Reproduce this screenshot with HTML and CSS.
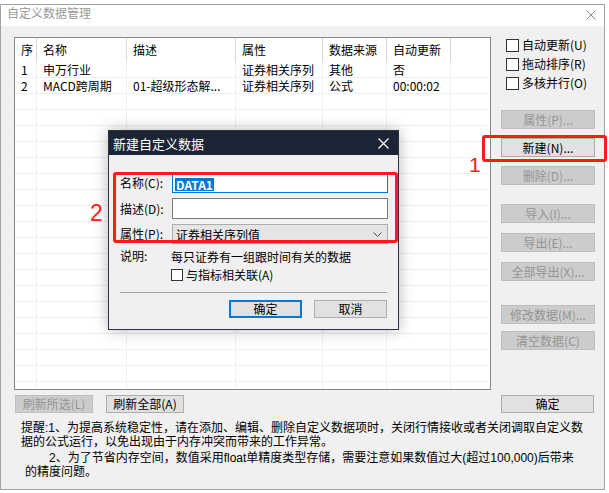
FILE: index.html
```html
<!DOCTYPE html>
<html lang="zh">
<head>
<meta charset="utf-8">
<title>自定义数据管理</title>
<link rel="stylesheet" href="styles.css">
</head>
<body>
<div class="topstrip"></div>
<div class="window">
  <div class="titlebar">
    <span class="title">自定义数据管理</span>
    <svg class="close" width="10" height="10" viewBox="0 0 10 10"><path d="M0.5 0.5L9.5 9.5M9.5 0.5L0.5 9.5" stroke="#8c8c8c" stroke-width="1"/></svg>
  </div>
  <div class="content">
    <div class="main">
      <div class="list">
        <div class="row head">
          <div class="c c1">序</div><div class="c c2">名称</div><div class="c c3">描述</div><div class="c c4">属性</div><div class="c c5">数据来源</div><div class="c c6">自动更新</div><div class="c c7"></div>
        </div>
        <div class="row">
          <div class="c c1">1</div><div class="c c2">申万行业</div><div class="c c3"></div><div class="c c4">证券相关序列</div><div class="c c5">其他</div><div class="c c6">否</div><div class="c c7"></div>
        </div>
        <div class="row">
          <div class="c c1">2</div><div class="c c2">MACD跨周期</div><div class="c c3">01-超级形态解...</div><div class="c c4">证券相关序列</div><div class="c c5">公式</div><div class="c c6">00:00:02</div><div class="c c7"></div>
        </div>
        <div class="row"><div class="c c1"></div><div class="c c2"></div><div class="c c3"></div><div class="c c4"></div><div class="c c5"></div><div class="c c6"></div><div class="c c7"></div></div>
        <div class="row"><div class="c c1"></div><div class="c c2"></div><div class="c c3"></div><div class="c c4"></div><div class="c c5"></div><div class="c c6"></div><div class="c c7"></div></div>
        <div class="row"><div class="c c1"></div><div class="c c2"></div><div class="c c3"></div><div class="c c4"></div><div class="c c5"></div><div class="c c6"></div><div class="c c7"></div></div>
        <div class="row"><div class="c c1"></div><div class="c c2"></div><div class="c c3"></div><div class="c c4"></div><div class="c c5"></div><div class="c c6"></div><div class="c c7"></div></div>
        <div class="row"><div class="c c1"></div><div class="c c2"></div><div class="c c3"></div><div class="c c4"></div><div class="c c5"></div><div class="c c6"></div><div class="c c7"></div></div>
        <div class="row"><div class="c c1"></div><div class="c c2"></div><div class="c c3"></div><div class="c c4"></div><div class="c c5"></div><div class="c c6"></div><div class="c c7"></div></div>
        <div class="row"><div class="c c1"></div><div class="c c2"></div><div class="c c3"></div><div class="c c4"></div><div class="c c5"></div><div class="c c6"></div><div class="c c7"></div></div>
        <div class="row"><div class="c c1"></div><div class="c c2"></div><div class="c c3"></div><div class="c c4"></div><div class="c c5"></div><div class="c c6"></div><div class="c c7"></div></div>
        <div class="row"><div class="c c1"></div><div class="c c2"></div><div class="c c3"></div><div class="c c4"></div><div class="c c5"></div><div class="c c6"></div><div class="c c7"></div></div>
        <div class="row"><div class="c c1"></div><div class="c c2"></div><div class="c c3"></div><div class="c c4"></div><div class="c c5"></div><div class="c c6"></div><div class="c c7"></div></div>
        <div class="row"><div class="c c1"></div><div class="c c2"></div><div class="c c3"></div><div class="c c4"></div><div class="c c5"></div><div class="c c6"></div><div class="c c7"></div></div>
        <div class="row"><div class="c c1"></div><div class="c c2"></div><div class="c c3"></div><div class="c c4"></div><div class="c c5"></div><div class="c c6"></div><div class="c c7"></div></div>
        <div class="row"><div class="c c1"></div><div class="c c2"></div><div class="c c3"></div><div class="c c4"></div><div class="c c5"></div><div class="c c6"></div><div class="c c7"></div></div>
        <div class="row"><div class="c c1"></div><div class="c c2"></div><div class="c c3"></div><div class="c c4"></div><div class="c c5"></div><div class="c c6"></div><div class="c c7"></div></div>
        <div class="row"><div class="c c1"></div><div class="c c2"></div><div class="c c3"></div><div class="c c4"></div><div class="c c5"></div><div class="c c6"></div><div class="c c7"></div></div>
        <div class="row"><div class="c c1"></div><div class="c c2"></div><div class="c c3"></div><div class="c c4"></div><div class="c c5"></div><div class="c c6"></div><div class="c c7"></div></div>
        <div class="row"><div class="c c1"></div><div class="c c2"></div><div class="c c3"></div><div class="c c4"></div><div class="c c5"></div><div class="c c6"></div><div class="c c7"></div></div>
        <div class="row"><div class="c c1"></div><div class="c c2"></div><div class="c c3"></div><div class="c c4"></div><div class="c c5"></div><div class="c c6"></div><div class="c c7"></div></div>
        <div class="row"><div class="c c1"></div><div class="c c2"></div><div class="c c3"></div><div class="c c4"></div><div class="c c5"></div><div class="c c6"></div><div class="c c7"></div></div>
      </div>
      <div class="side">
        <div class="check"><span class="box"></span><span>自动更新(U)</span></div>
        <div class="check"><span class="box"></span><span>拖动排序(R)</span></div>
        <div class="check"><span class="box"></span><span>多核并行(O)</span></div>
        <div class="group ga">
          <div class="btn dis">属性(P)...</div>
          <div class="btn">新建(N)...</div>
          <div class="btn dis">删除(D)...</div>
        </div>
        <div class="group gb">
          <div class="btn dis">导入(I)...</div>
          <div class="btn dis">导出(E)...</div>
          <div class="btn dis">全部导出(X)...</div>
        </div>
        <div class="group gc">
          <div class="btn dis">修改数据(M)...</div>
          <div class="btn dis">清空数据(C)</div>
        </div>
      </div>
    </div>
    <div class="bottom">
      <div class="btn dis small">刷新所选(L)</div>
      <div class="btn small">刷新全部(A)</div>
      <div class="btn ok">确定</div>
    </div>
    <div class="notes">
      <p class="p1">提醒:1、为提高系统稳定性，请在添加、编辑、删除自定义数据项时，关闭行情接收或者关闭调取自定义数<br>据的公式运行，以免出现由于内存冲突而带来的工作异常。</p>
      <p class="p2">　　2、为了节省内存空间，数值采用float单精度类型存储，需要注意如果数值过大(超过100,000)后带来<br>的精度问题。</p>
    </div>
  </div>
</div>

<div class="dialog">
  <div class="dtitle">
    <span>新建自定义数据</span>
    <svg class="dclose" width="11" height="11" viewBox="0 0 11 11"><path d="M0.5 0.5L10.5 10.5M10.5 0.5L0.5 10.5" stroke="#ffffff" stroke-width="1.2"/></svg>
  </div>
  <div class="dbody">
    <div class="form">
      <div class="lab">名称(C):</div>
      <div class="inp focus"><span class="sel">DATA1</span></div>
      <div class="lab">描述(D):</div>
      <div class="inp"></div>
      <div class="lab">属性(P):</div>
      <div class="combo"><span>证券相关序列值</span><svg width="9" height="5" viewBox="0 0 9 5"><path d="M0.5 0.5L4.5 4.5L8.5 0.5" fill="none" stroke="#444" stroke-width="1"/></svg></div>
      <div class="lab short">说明:</div>
      <div class="desc">每只证券有一组跟时间有关的数据</div>
      <div class="lab short"></div>
      <div class="dcheck"><span class="box sm"></span><span>与指标相关联(A)</span></div>
    </div>
    <div class="sep"></div>
    <div class="dbtns">
      <div class="btn dbtn def">确定</div>
      <div class="btn dbtn">取消</div>
    </div>
  </div>
</div>

<div class="mark mark-new"></div>
<div class="mark mark-form"></div>
<span class="num num1">1</span>
<span class="num num2">2</span>
</body>
</html>
```

FILE: styles.css
```css
* { box-sizing: border-box; }

body {
  margin: 0;
  width: 609px;
  height: 493px;
  overflow: hidden;
  position: relative;
  background: #ffffff;
  font-family: "Noto Sans CJK SC", "Microsoft YaHei", sans-serif;
  font-size: 12px;
  color: #000;
}

.topstrip {
  height: 4px;
  background: #ffffff;
}

.window {
  width: 605px;
  height: 486px;
  border: 1px solid #a3a3a3;
  background: #f0f0f0;
  display: flex;
  flex-direction: column;
}

.titlebar {
  height: 21px;
  background: #ffffff;
  display: flex;
  justify-content: space-between;
  align-items: flex-start;
  padding: 1px 8px 0 6px;
}

.title {
  color: #9a9a9a;
  line-height: 14px;
  font-size: 12px;
}

.close {
  margin-top: 4px;
}

.content {
  padding: 11px 0 0 13px;
  display: flex;
  flex-direction: column;
}

.main {
  display: flex;
  align-items: flex-start;
}

.list {
  width: 477px;
  height: 353px;
  border: 1px solid #828790;
  background: #ffffff;
  overflow: hidden;
}

.row {
  display: flex;
  height: 16px;
  border-bottom: 1px solid #efefef;
}

.row.head {
  height: 24px;
  border-bottom: none;
}

.c {
  height: 100%;
  padding-left: 6px;
  border-right: 1px solid #efefef;
  white-space: nowrap;
  overflow: hidden;
  line-height: 15px;
}

.head .c {
  line-height: 23px;
  border-right: 1px solid #d9d9d9;
}

.c1 { width: 22px; }
.c2 { width: 90px; }
.c3 { width: 109px; }
.c4 { width: 87px; }
.c5 { width: 64px; }
.c6 { width: 64px; }
.c7 { flex: 1; border-right: none; }
.head .c7 { border-right: none; }

.side {
  margin-left: 10px;
  width: 94px;
  display: flex;
  flex-direction: column;
}

.check {
  height: 19px;
  display: flex;
  align-items: flex-start;
  padding-left: 5px;
  line-height: 16px;
}

.box {
  width: 13px;
  height: 13px;
  border: 1px solid #333333;
  background: #ffffff;
  margin: 2px 3px 0 0;
  flex: none;
}

.group {
  display: flex;
  flex-direction: column;
}

.ga { margin-top: 16px; gap: 9px; }
.gb { margin-top: 19px; gap: 10px; }
.gc { margin-top: 24px; gap: 7px; }

.btn {
  height: 19px;
  border: 1px solid #adadad;
  background: #e1e1e1;
  display: flex;
  align-items: center;
  justify-content: center;
  line-height: 16px;
  white-space: nowrap;
}

.btn.dis {
  background: #cccccc;
  border-color: #bfbfbf;
  color: #949494;
}

.bottom {
  display: flex;
  margin-top: 5px;
  padding: 0 10px 0 1px;
}

.bottom .btn { height: 18px; }
.small { width: 78px; margin-right: 13px; }
.ok { width: 93px; margin-left: auto; }

.notes p {
  margin: 0;
  font-family: "Liberation Sans", "Noto Sans CJK SC", sans-serif;
  line-height: 13.5px;
  white-space: nowrap;
}

.p1 {
  margin-top: 9px !important;
  padding-left: 7px;
}

.p2 {
  margin-top: 3px !important;
  padding-left: 11px;
}

/* dialog */
.dialog {
  position: absolute;
  left: 108px;
  top: 130px;
  width: 291px;
  border: 1px solid #2a3342;
  background: #f0f0f0;
  box-shadow: 0 0 14px rgba(0, 0, 0, 0.28);
}

.dtitle {
  height: 24px;
  background: #1c2536;
  color: #ffffff;
  display: flex;
  justify-content: space-between;
  align-items: center;
  padding: 0 9px 0 4px;
  font-size: 13px;
}

.dbody {
  padding: 18px 11px 11px 11px;
}

.form {
  display: grid;
  grid-template-columns: 52px 216px;
  row-gap: 5px;
  align-items: center;
}

.lab {
  line-height: 14px;
  white-space: nowrap;
}

.inp {
  height: 20px;
  border: 1px solid #7a7a7a;
  background: #ffffff;
  padding: 2px 0 0 2px;
}

.inp + .lab + .inp { height: 21px; }

.inp.focus { border-color: #0078d7; }

.sel {
  display: inline-block;
  background: #0078d7;
  color: #ffffff;
  line-height: 13px;
  padding: 0 1px;
  font-weight: bold;
}

.combo {
  height: 20px;
  border: 1px solid #adadad;
  background: #e5e5e5;
  display: flex;
  align-items: center;
  justify-content: space-between;
  padding: 0 5px 0 3px;
}

.desc {
  line-height: 13px;
  margin-left: -1px;
  white-space: nowrap;
}

.dcheck {
  display: flex;
  align-items: center;
  height: 13px;
  margin-left: -1px;
  white-space: nowrap;
}

.box.sm {
  width: 12px;
  height: 12px;
  margin: 0 3px 0 0;
}

.sep {
  margin-top: 11px;
  height: 1px;
  background: #a0a0a0;
}

.dbtns {
  margin-top: 7px;
  display: flex;
  justify-content: flex-end;
  gap: 12px;
}

.dbtn {
  width: 73px;
  height: 18px;
}

.dbtn.def {
  border: 2px solid #0078d7;
}

/* annotations */
.mark {
  position: absolute;
  border: 3px solid #ff1a1a;
  border-radius: 3px;
}

.mark-new {
  left: 482px;
  top: 135px;
  width: 125px;
  height: 27px;
}

.mark-form {
  left: 113px;
  top: 172px;
  width: 285px;
  height: 71px;
}

.num {
  position: absolute;
  color: #ff1a1a;
  font-family: "Liberation Sans", sans-serif;
  line-height: 1;
}

.num1 {
  left: 469px;
  top: 154px;
  font-size: 21px;
}

.num2 {
  left: 90px;
  top: 202px;
  font-size: 23px;
}
```
